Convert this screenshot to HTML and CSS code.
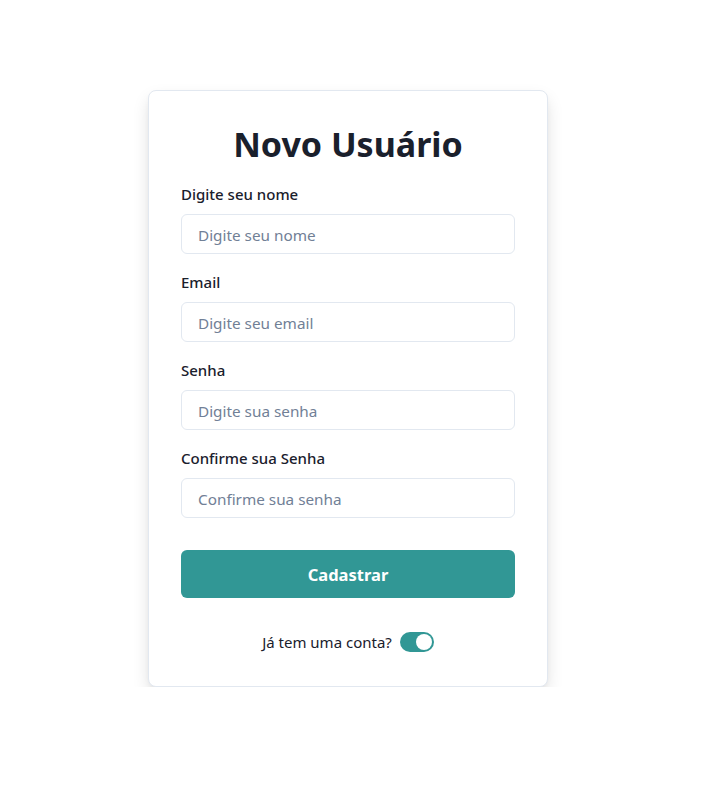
FILE: index.html
```html
<!DOCTYPE html>
<html lang="pt-BR">
<head>
<meta charset="utf-8">
<title>Novo Usuário</title>
<link rel="stylesheet" href="styles.css">
</head>
<body>
<div class="page">
  <form class="card">
    <h1 class="title">Novo Usuário</h1>
    <div class="field">
      <label class="label" for="nome">Digite seu nome</label>
      <input class="input" id="nome" type="text" placeholder="Digite seu nome">
    </div>
    <div class="field">
      <label class="label" for="email">Email</label>
      <input class="input" id="email" type="email" placeholder="Digite seu email">
    </div>
    <div class="field">
      <label class="label" for="senha">Senha</label>
      <input class="input" id="senha" type="password" placeholder="Digite sua senha">
    </div>
    <div class="field">
      <label class="label" for="confirma">Confirme sua Senha</label>
      <input class="input" id="confirma" type="password" placeholder="Confirme sua senha">
    </div>
    <button class="submit" type="button">Cadastrar</button>
    <div class="footer">
      <span>Já tem uma conta?</span>
      <span class="switch"><span class="knob"></span></span>
    </div>
  </form>
</div>
</body>
</html>
```
FILE: styles.css
```css
* { box-sizing: border-box; }
html, body { margin: 0; padding: 0; background: #ffffff; }
body {
  font-family: "Noto Sans", "Open Sans", sans-serif;
  color: #1a202c;
}
.page {
  display: flex;
  justify-content: center;
  align-items: flex-start;
  padding: 90px 16px 0 0;
}
.card {
  width: 400px;
  background: #fff;
  border: 1px solid #e2e8f0;
  border-radius: 8px;
  box-shadow: 0 8px 18px -2px rgba(0,0,0,0.14), 0 3px 6px -2px rgba(0,0,0,0.06);
  padding: 32px;
  display: flex;
  flex-direction: column;
  gap: 16px;
}
.title {
  margin: 0;
  font-size: 34px;
  line-height: 43px;
  font-weight: 700;
  text-align: center;
  color: #1a202c;
}
.field { display: flex; flex-direction: column; }
.label {
  font-size: 15px;
  line-height: 24px;
  font-weight: 500;
  margin-bottom: 8px;
}
.input {
  height: 40px;
  width: 100%;
  border: 1px solid #e2e8f0;
  border-radius: 6px;
  padding: 1px 16px 0;
  font-family: inherit;
  font-size: 15.3px;
  color: #1a202c;
  background: #fff;
  outline: none;
}
.input::placeholder { color: #718096; }
.submit {
  margin-top: 16px;
  height: 48px;
  border: 0;
  border-radius: 6px;
  background: #319795;
  color: #fff;
  font-family: inherit;
  font-size: 16.5px;
  font-weight: 700;
  cursor: pointer;
}
.footer {
  margin-top: 16px;
  display: flex;
  justify-content: center;
  align-items: center;
  gap: 8px;
  font-size: 15px;
  line-height: 24px;
}
.switch {
  width: 34px;
  height: 20px;
  border-radius: 10px;
  background: #319795;
  padding: 2px;
  display: flex;
  justify-content: flex-end;
}
.knob {
  width: 16px;
  height: 16px;
  border-radius: 50%;
  background: #fff;
}
```
